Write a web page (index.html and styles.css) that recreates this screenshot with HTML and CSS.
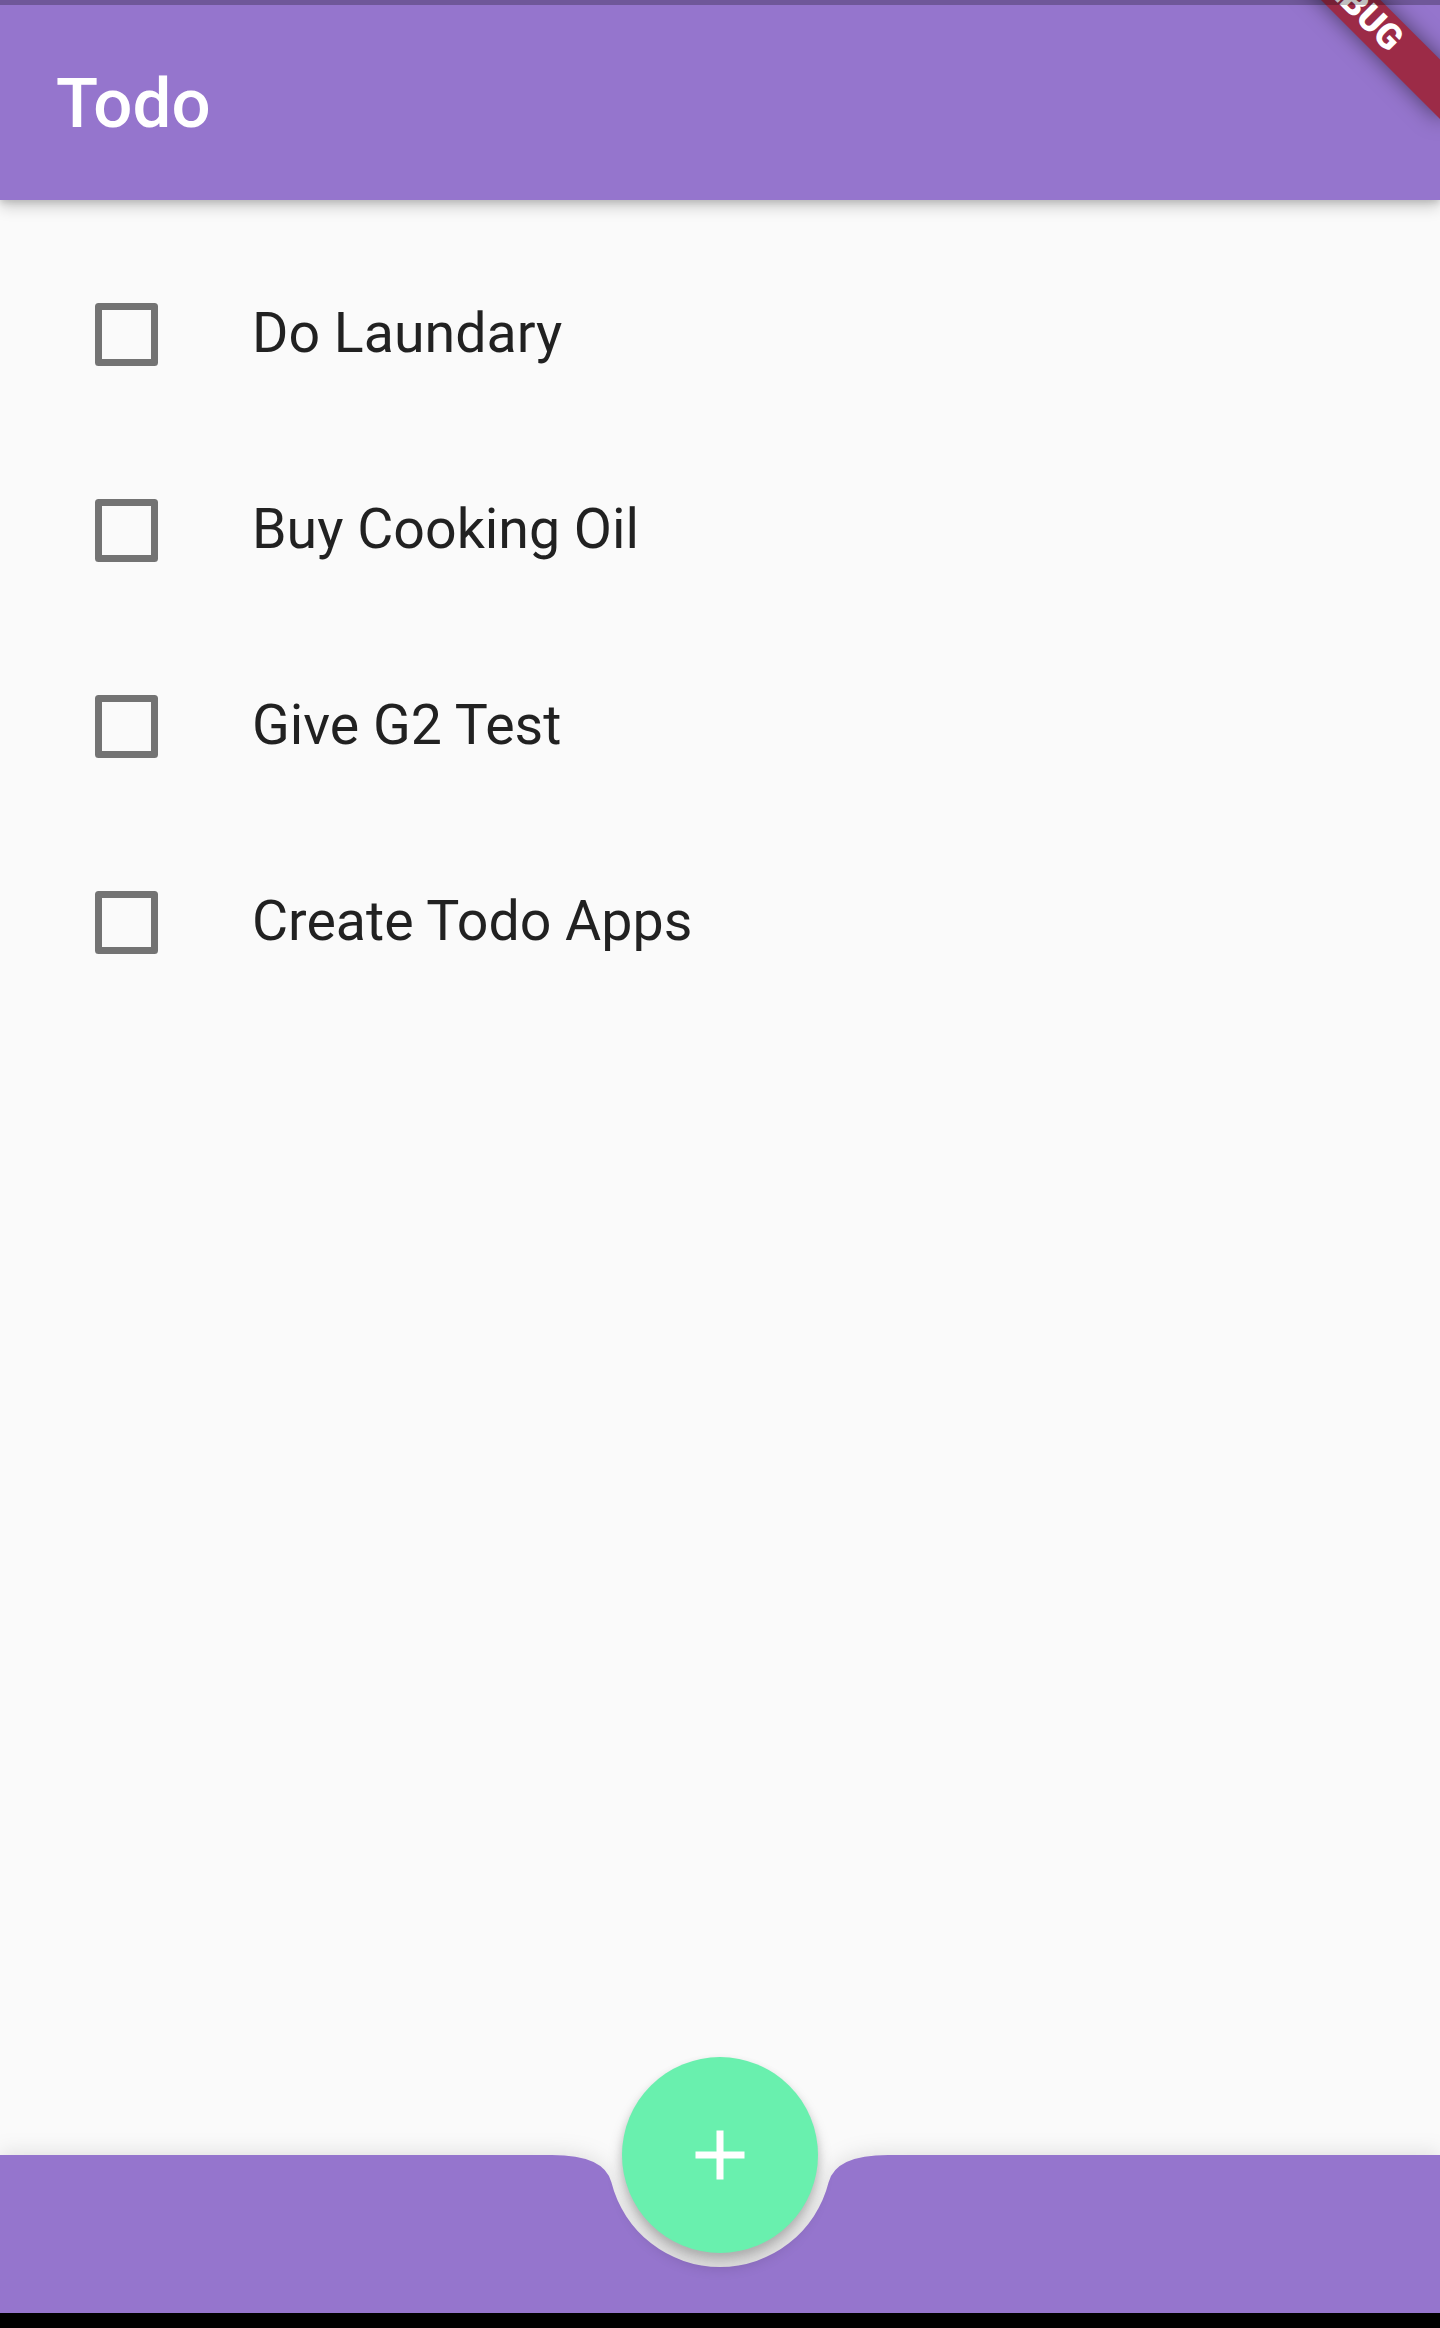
FILE: index.html
```html
<!DOCTYPE html>
<html lang="en">
<head>
<meta charset="utf-8">
<title>Todo</title>
<link rel="stylesheet" href="styles.css">
</head>
<body>
<div class="screen">
  <header class="appbar">
    <h1 class="title">Todo</h1>
  </header>
  <main class="list">
    <div class="row">
      <div class="leading"><span class="checkbox"></span></div>
      <span class="label">Do Laundary</span>
    </div>
    <div class="row">
      <div class="leading"><span class="checkbox"></span></div>
      <span class="label">Buy Cooking Oil</span>
    </div>
    <div class="row">
      <div class="leading"><span class="checkbox"></span></div>
      <span class="label">Give G2 Test</span>
    </div>
    <div class="row">
      <div class="leading"><span class="checkbox"></span></div>
      <span class="label">Create Todo Apps</span>
    </div>
  </main>
  <footer class="bottombar">
    <svg class="bar-shape" width="1440" height="158" viewBox="0 0 1440 158">
      <path d="M0 0 L552 0 Q604.5 0 611.394 27.365 A112 112 0 0 0 828.606 27.365 Q835.5 0 888 0 L1440 0 L1440 158 L0 158 Z" fill="#9575CD"/>
    </svg>
    <button class="fab" type="button" aria-label="Add">
      <svg width="84" height="84" viewBox="0 0 24 24"><path d="M19 13h-6v6h-2v-6H5v-2h6V5h2v6h6v2z" fill="#FFFFFF"/></svg>
    </button>
  </footer>
  <div class="navbar"></div>
</div>
<div class="status-scrim"></div>
<div class="banner-anchor"><div class="banner">DEBUG</div></div>
</body>
</html>
```
FILE: styles.css
```css
html, body {
  margin: 0;
  padding: 0;
}
body {
  width: 1440px;
  height: 2328px;
  overflow: hidden;
  position: relative;
  background: #FAFAFA;
  font-family: Roboto, "Noto Sans", "Liberation Sans", sans-serif;
}
.screen {
  display: flex;
  flex-direction: column;
  height: 2328px;
}
.appbar {
  flex: 0 0 auto;
  height: 200px;
  padding: 7px 56px 0 56px;
  box-sizing: border-box;
  display: flex;
  align-items: center;
  background: #9575CD;
  box-shadow: 0 7px 14px rgba(0,0,0,0.18), 0 3px 6px rgba(0,0,0,0.12);
  position: relative;
  z-index: 2;
}
.title {
  margin: 0;
  font-size: 69px;
  font-weight: 500;
  color: #FFFFFF;
  line-height: 1;
}
.list {
  flex: 1 1 auto;
  padding-top: 36px;
  display: flex;
  flex-direction: column;
}
.row {
  height: 196px;
  display: flex;
  align-items: center;
  padding: 0 56px;
  gap: 56px;
}
.leading {
  width: 140px;
  display: flex;
  justify-content: center;
  align-items: center;
}
.checkbox {
  width: 63px;
  height: 63px;
  box-sizing: border-box;
  border: 7px solid #737373;
  border-radius: 3.5px;
}
.label {
  font-size: 55.5px;
  color: rgba(0,0,0,0.87);
  line-height: 1.2;
}
.bottombar {
  flex: 0 0 158px;
  height: 158px;
  position: relative;
}
.bar-shape {
  display: block;
  overflow: visible;
  filter: drop-shadow(0 -3px 10px rgba(0,0,0,0.10));
}
.fab {
  position: absolute;
  left: 622px;
  top: -98px;
  width: 196px;
  height: 196px;
  border: none;
  padding: 0;
  border-radius: 50%;
  background: #69F0AE;
  display: flex;
  align-items: center;
  justify-content: center;
  box-shadow: 0 12px 16px rgba(0,0,0,0.20), 0 4px 8px rgba(0,0,0,0.14);
}
.fab svg {
  display: block;
}
.navbar {
  flex: 0 0 15px;
  height: 15px;
  background: #000000;
}
.status-scrim {
  position: absolute;
  left: 0;
  top: 0;
  width: 1440px;
  height: 5px;
  background: rgba(0,0,0,0.25);
  z-index: 20;
}
.banner-anchor {
  position: absolute;
  left: 1440px;
  top: -79px;
  width: 0;
  height: 0;
  transform: rotate(45deg);
  transform-origin: 0 0;
  z-index: 10;
}
.banner {
  position: absolute;
  left: -140px;
  top: 98px;
  width: 280px;
  height: 42px;
  background: #9C2B47;
  box-shadow: 0 0 21px rgba(0,0,0,0.5);
  color: #FFFFFF;
  font-family: Roboto, "Liberation Sans", sans-serif;
  font-size: 35.7px;
  font-weight: 900;
  line-height: 1;
  display: flex;
  align-items: center;
  justify-content: center;
}
```
